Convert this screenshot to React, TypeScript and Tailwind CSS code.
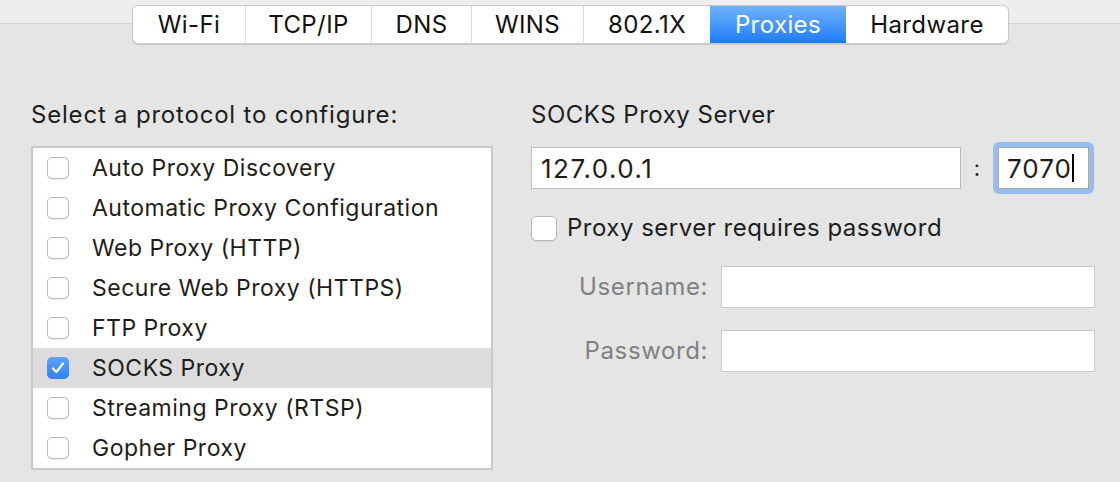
import React from 'react';

const tabs = [
  { name: 'Wi-Fi', w: 'w-[112px]' },
  { name: 'TCP/IP', w: 'w-[126px]' },
  { name: 'DNS', w: 'w-[100px]' },
  { name: 'WINS', w: 'w-[112px]' },
  { name: '802.1X', w: 'w-[127px]' },
  { name: 'Proxies', w: 'w-[136px]', active: true },
  { name: 'Hardware', w: 'w-[162px]' },
];

const protocols = [
  'Auto Proxy Discovery',
  'Automatic Proxy Configuration',
  'Web Proxy (HTTP)',
  'Secure Web Proxy (HTTPS)',
  'FTP Proxy',
  'SOCKS Proxy',
  'Streaming Proxy (RTSP)',
  'Gopher Proxy',
];

const Checkbox = ({ checked, size = 'w-[22px] h-[22px]' }: { checked?: boolean; size?: string }) =>
  checked ? (
    <div className={`${size} rounded-[5px] bg-gradient-to-b from-[#5aa2fa] to-[#2f82f5] flex items-center justify-center shrink-0`}>
      <svg width="14" height="12" viewBox="0 0 14 12" fill="none">
        <path d="M2 6.5 L5.3 10 L12 1.5" stroke="white" strokeWidth="2.2" strokeLinecap="round" strokeLinejoin="round" />
      </svg>
    </div>
  ) : (
    <div className={`${size} rounded-[5px] bg-white border border-[#b9b9b9] shadow-[0_1px_0_rgba(0,0,0,0.06)] shrink-0`} />
  );

export default function App() {
  return (
    <div
      className="w-[1120px] h-[482px] bg-[#e5e5e5] relative overflow-hidden text-[#1d1d1d]"
      style={{ fontFamily: 'Inter, "Liberation Sans", sans-serif' }}
    >
      {/* top band */}
      <div className="h-[24px] bg-[#eeeeee] border-b border-[#d2d2d2]" />

      {/* tab bar */}
      <div className="absolute left-[132px] top-[5px] flex h-[39px] rounded-[6px] bg-white border border-[#c9c9c9] shadow-[0_1px_1px_rgba(0,0,0,0.12)] overflow-hidden">
        {tabs.map((t, i) => (
          <div
            key={t.name}
            className={`${t.w} h-full flex items-center justify-center text-[24px] tracking-[0.4px] ${
              t.active
                ? 'bg-gradient-to-b from-[#6db2fb] to-[#1b7bfa] text-white'
                : 'text-[#111]'
            } ${i > 0 && !t.active && !tabs[i - 1].active ? 'border-l border-[#dcdcdc]' : ''}`}
          >
            {t.name}
          </div>
        ))}
      </div>

      <div className="flex pl-[31px] pt-[75px]">
        {/* left column */}
        <div className="w-[462px]">
          <div className="text-[24px] tracking-[0.8px] h-[32px] leading-[32px]">Select a protocol to configure:</div>
          <div className="mt-[15px] bg-white border-2 border-[#c8c8c8]">
            {protocols.map((p) => {
              const active = p === 'SOCKS Proxy';
              return (
                <div
                  key={p}
                  className={`h-[40px] flex items-center pl-[14px] gap-[23px] text-[23px] tracking-[0.5px] ${active ? 'bg-[#dcdcdc]' : ''}`}
                >
                  <Checkbox checked={active} />
                  <span>{p}</span>
                </div>
              );
            })}
          </div>
        </div>

        {/* right column */}
        <div className="ml-[38px] w-[565px]">
          <div className="text-[24px] tracking-[0.5px] h-[32px] leading-[32px]">SOCKS Proxy Server</div>
          <div className="mt-[11px] flex items-center">
            <div className="w-[430px] h-[42px] bg-white border border-[#bdbdbd] flex items-center pl-[9px] text-[26px] tracking-[1.5px]">
              127.0.0.1
            </div>
            <span className="w-[32px] text-center text-[22px]">:</span>
            <div className="rounded-[6px] bg-[#94bdf0] p-[5px]">
              <div className="w-[91px] h-[42px] bg-white border border-[#a9a9a9] flex items-center pl-[8px] text-[26px] tracking-[1px]">
                7070<span className="w-[2px] h-[28px] bg-black" />
              </div>
            </div>
          </div>
          <div className="mt-[16px] flex items-center gap-[10px]">
            <Checkbox size="w-[26px] h-[25px]" />
            <span className="text-[24px] tracking-[0.5px]">Proxy server requires password</span>
          </div>
          <div className="mt-[20px] flex flex-col gap-[22px]">
            {['Username:', 'Password:'].map((l) => (
              <div key={l} className="flex items-center">
                <span className="w-[190px] text-right text-[24px] tracking-[0.6px] text-[#808080] pr-[13px]">{l}</span>
                <div className="w-[374px] h-[42px] bg-white border border-[#cacaca]" />
              </div>
            ))}
          </div>
        </div>
      </div>
    </div>
  );
}
